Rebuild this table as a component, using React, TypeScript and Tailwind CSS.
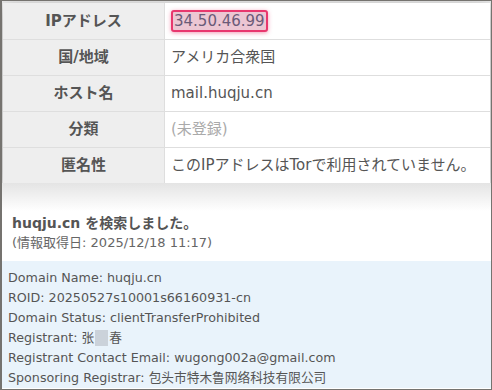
import React from "react";

const font = { fontFamily: '"DejaVu Sans", "Noto Sans CJK JP", sans-serif' };

const rows: { label: string; value: React.ReactNode }[] = [
  {
    label: "IPアドレス",
    value: (
      <span className="inline-block rounded-[3px] border-2 border-[#e8376e] bg-[#ecc6d3] px-[1px] leading-[18px] text-[#6a5a78] shadow-[0_1px_4px_rgba(232,55,110,0.5)]">
        34.50.46.99
      </span>
    ),
  },
  { label: "国/地域", value: "アメリカ合衆国" },
  { label: "ホスト名", value: "mail.huqju.cn" },
  { label: "分類", value: <span className="text-[#aaaaaa]">(未登録)</span> },
  { label: "匿名性", value: "このIPアドレスはTorで利用されていません。" },
];

export default function App() {
  return (
    <div
      className="h-[390px] w-[492px] overflow-hidden border-y border-l-2 border-r border-[#75736f] bg-white"
      style={font}
    >
      <div className="bg-[#ececec] px-[1px] pt-[2px]">
        <div className="bg-white shadow-[0_4px_16px_rgba(0,0,0,0.3)]">
          {rows.map((r, i) => (
            <div
              key={r.label}
              className={`flex h-[36px] ${i > 0 ? "border-t border-[#dedede]" : ""}`}
            >
              <div className="flex w-[162px] shrink-0 items-center justify-center border-r border-[#dedede] bg-[#eeeeee] text-[15px] font-bold text-[#555555]">
                {r.label}
              </div>
              <div className="flex items-center pl-[6px] text-[15px] text-[#555555]">
                {r.value}
              </div>
            </div>
          ))}
        </div>
      </div>
      <div className="bg-gradient-to-b from-[#e4e4e4] to-white to-[40%] pt-[30px]">
        <div className="pl-[10px] text-[14px] font-bold leading-[20px] text-[#555555]">
          huqju.cn を検索しました。
        </div>
        <div className="pl-[10px] text-[13px] leading-[20px] text-[#666666]">
          (情報取得日: 2025/12/18 11:17)
        </div>
      </div>
      <div className="mt-[8px] bg-[#e9f3fb] px-[6px] pt-[7px] text-[12.7px] leading-[20px] text-[#555555]">
        <div>Domain Name: huqju.cn</div>
        <div>ROID: 20250527s10001s66160931-cn</div>
        <div>Domain Status: clientTransferProhibited</div>
        <div className="flex h-[20px] items-center">
          <span>Registrant: 张</span>
          <span className="mx-[1px] inline-block h-[16px] w-[13px] bg-[#cbd2da]" />
          <span>春</span>
        </div>
        <div>Registrant Contact Email: wugong002a@gmail.com</div>
        <div>Sponsoring Registrar: 包头市特木鲁网络科技有限公司</div>
      </div>
    </div>
  );
}
